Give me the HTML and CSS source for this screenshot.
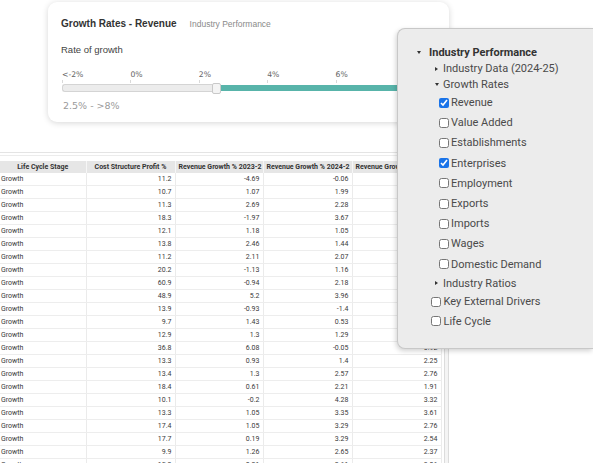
FILE: index.html
```html
<!DOCTYPE html>
<html lang="en">
<head>
    <meta charset="UTF-8">
    <meta name="viewport" content="width=device-width, initial-scale=1.0">
    <title>Growth Rates - Revenue</title>
    <link rel="stylesheet" href="styles.css">
</head>
<body>
    <div class="card">
        <div class="card-head">
            <span class="card-title">Growth Rates - Revenue</span>
            <span class="card-sub">Industry Performance</span>
        </div>
        <div class="rate-label">Rate of growth</div>
        <div class="scale">
            <div class="mark">&lt;-2%</div>
            <div class="mark">0%</div>
            <div class="mark">2%</div>
            <div class="mark">4%</div>
            <div class="mark">6%</div>
            <div class="mark">&gt;8%</div>
        </div>
        <div class="track">
            <div class="track-off"></div>
            <div class="handle"></div>
            <div class="track-on"></div>
        </div>
        <div class="range-text">2.5% - &gt;8%</div>
    </div>

    <div class="grid">
        <div class="grid-inner">
            <table class="data">
                <colgroup>
                    <col style="width:86px"><col style="width:89px"><col style="width:88px"><col style="width:89px"><col style="width:89px">
                </colgroup>
                <thead>
                    <tr>
                        <th>Life Cycle Stage</th>
                        <th>Cost Structure Profit %</th>
                        <th>Revenue Growth % 2023-2</th>
                        <th>Revenue Growth % 2024-2</th>
                        <th>Revenue Growth % 2025-2</th>
                    </tr>
                </thead>
                <tbody>
                    <tr><td>Growth</td><td>11.2</td><td>-4.69</td><td>-0.06</td><td>1.85</td></tr>
                    <tr><td>Growth</td><td>10.7</td><td>1.07</td><td>1.99</td><td>2.12</td></tr>
                    <tr><td>Growth</td><td>11.3</td><td>2.69</td><td>2.28</td><td>2.4</td></tr>
                    <tr><td>Growth</td><td>18.3</td><td>-1.97</td><td>3.67</td><td>3.05</td></tr>
                    <tr><td>Growth</td><td>12.1</td><td>1.18</td><td>1.05</td><td>1.62</td></tr>
                    <tr><td>Growth</td><td>13.8</td><td>2.46</td><td>1.44</td><td>1.97</td></tr>
                    <tr><td>Growth</td><td>11.2</td><td>2.11</td><td>2.07</td><td>2.3</td></tr>
                    <tr><td>Growth</td><td>20.2</td><td>-1.13</td><td>1.16</td><td>1.48</td></tr>
                    <tr><td>Growth</td><td>60.9</td><td>-0.94</td><td>2.18</td><td>2.6</td></tr>
                    <tr><td>Growth</td><td>48.9</td><td>5.2</td><td>3.96</td><td>3.71</td></tr>
                    <tr><td>Growth</td><td>13.9</td><td>-0.93</td><td>-1.4</td><td>0.84</td></tr>
                    <tr><td>Growth</td><td>9.7</td><td>1.43</td><td>0.53</td><td>1.12</td></tr>
                    <tr><td>Growth</td><td>12.9</td><td>1.3</td><td>1.29</td><td>1.66</td></tr>
                    <tr><td>Growth</td><td>36.8</td><td>6.08</td><td>-0.05</td><td>0.92</td></tr>
                    <tr><td>Growth</td><td>13.3</td><td>0.93</td><td>1.4</td><td>2.25</td></tr>
                    <tr><td>Growth</td><td>13.4</td><td>1.3</td><td>2.57</td><td>2.76</td></tr>
                    <tr><td>Growth</td><td>18.4</td><td>0.61</td><td>2.21</td><td>1.91</td></tr>
                    <tr><td>Growth</td><td>10.1</td><td>-0.2</td><td>4.28</td><td>3.32</td></tr>
                    <tr><td>Growth</td><td>13.3</td><td>1.05</td><td>3.35</td><td>3.61</td></tr>
                    <tr><td>Growth</td><td>17.4</td><td>1.05</td><td>3.29</td><td>2.76</td></tr>
                    <tr><td>Growth</td><td>17.7</td><td>0.19</td><td>3.29</td><td>2.54</td></tr>
                    <tr><td>Growth</td><td>9.9</td><td>1.26</td><td>2.65</td><td>2.37</td></tr>
                    <tr><td>Growth</td><td>15.2</td><td>0.21</td><td>2.61</td><td>3.06</td></tr>
                </tbody>
            </table>
            <div class="vscroll"></div>
        </div>
    </div>

    <div class="menu">
        <div class="node lvl0"><i class="caret down"></i>Industry Performance</div>
        <div class="node lvl1"><i class="caret right"></i>Industry Data (2024-25)</div>
        <div class="node lvl1"><i class="caret down"></i>Growth Rates</div>
        <label class="opt lvl2"><input type="checkbox" checked>Revenue</label>
        <label class="opt lvl2"><input type="checkbox">Value Added</label>
        <label class="opt lvl2"><input type="checkbox">Establishments</label>
        <label class="opt lvl2"><input type="checkbox" checked>Enterprises</label>
        <label class="opt lvl2"><input type="checkbox">Employment</label>
        <label class="opt lvl2"><input type="checkbox">Exports</label>
        <label class="opt lvl2"><input type="checkbox">Imports</label>
        <label class="opt lvl2"><input type="checkbox">Wages</label>
        <label class="opt lvl2"><input type="checkbox">Domestic Demand</label>
        <div class="node lvl1 ratios"><i class="caret right"></i>Industry Ratios</div>
        <label class="opt lvl1 drivers"><input type="checkbox">Key External Drivers</label>
        <label class="opt lvl1"><input type="checkbox">Life Cycle</label>
    </div>
</body>
</html>
```

FILE: styles.css
```css
html, body {
    margin: 0;
    padding: 0;
    background: #fff;
    height: 463px;
    overflow: hidden;
}
body {
    font-family: "Liberation Sans", Arial, sans-serif;
    color: #333;
    position: relative;
}
.card {
    box-sizing: border-box;
    width: 401px;
    height: 120px;
    margin: 2px 0 0 48px;
    padding: 15.5px 14px 0 13px;
    background: #fff;
    border-radius: 9px;
    box-shadow: 0 1px 6px rgba(0, 0, 0, 0.16);
}
.card-head {
    display: flex;
    align-items: baseline;
    line-height: 12px;
}
.card-title {
    font-size: 10px;
    font-weight: bold;
    color: #333;
}
.card-sub {
    margin-left: 13px;
    font-size: 8.5px;
    color: #8a8a8a;
}
.rate-label {
    margin-top: 14px;
    font-size: 9.5px;
    line-height: 12px;
    color: #444;
}
.scale {
    display: flex;
    width: 373px;
    margin: 14px 0 0 1px;
    font-family: "DejaVu Sans", Verdana, sans-serif;
    font-size: 7.7px;
    line-height: 10px;
    color: #666;
}
.mark {
    flex: 0 0 68.4px;
}
.mark:last-child {
    flex: 1;
    visibility: hidden;
}
.mark::after {
    content: "";
    display: block;
    width: 0;
    height: 3px;
    border-left: 1px solid #d9d9d9;
}
.track {
    display: flex;
    align-items: center;
    width: 373px;
    height: 11px;
    margin-left: 1px;
}
.track-off {
    box-sizing: border-box;
    width: 150px;
    height: 8px;
    background: #ececec;
    border: 1px solid #d4d4d4;
    border-right: none;
    border-radius: 3px 0 0 3px;
}
.handle {
    box-sizing: border-box;
    width: 9px;
    height: 11px;
    background: #f4f4f4;
    border: 1px solid #c9c9c9;
    border-radius: 2px;
}
.track-on {
    flex: 1;
    height: 6px;
    background: #58b4aa;
}
.range-text {
    margin: 6px 0 0 2px;
    font-family: "DejaVu Sans", Verdana, sans-serif;
    font-size: 9.5px;
    line-height: 12px;
    color: #9a9a9a;
}

/* table */
.grid {
    width: 449px;
    margin-top: 30px;
    border-top: 1px solid #e4e4e4;
    padding-top: 2px;
}
.grid-inner {
    display: flex;
    border-top: 1px solid #ececec;
    padding-top: 5px;
}
.data {
    border-collapse: collapse;
    table-layout: fixed;
    width: 441px;
    font-family: Roboto, "Liberation Sans", sans-serif;
    font-size: 7px;
    color: #3a3a3a;
}
.data th {
    height: 12px;
    padding: 0 3px;
    background: #e6e6e6;
    border-right: 1px solid #f6f6f6;
    font-weight: bold;
    text-align: center;
    white-space: nowrap;
    overflow: hidden;
    line-height: 12px;
    color: #333;
}
.data td {
    height: 12px;
    padding: 0 3px;
    line-height: 12px;
    text-align: right;
    border-right: 1px solid #ebebeb;
    border-bottom: 1px solid #ededed;
    white-space: nowrap;
    overflow: hidden;
}
.data td:first-child {
    text-align: left;
    padding-left: 1px;
}
.vscroll {
    box-sizing: border-box;
    width: 6px;
    margin-left: 2px;
    background: #f4f4f4;
    border-left: 1px solid #dcdcdc;
    border-right: 1px solid #dcdcdc;
}

/* tree menu */
.menu {
    position: absolute;
    left: 397px;
    top: 28px;
    box-sizing: border-box;
    width: 196px;
    height: 321px;
    padding-top: 15.5px;
    background: #ececec;
    border: 1px solid #c8c8c8;
    border-right: none;
    border-radius: 8px 0 0 8px;
    box-shadow: -1px 2px 5px rgba(0, 0, 0, 0.18);
    font-family: Roboto, "Liberation Sans", sans-serif;
    font-size: 11px;
    color: #4a4a4a;
}
.node, .opt {
    display: flex;
    align-items: center;
    white-space: nowrap;
}
.node {
    height: 16px;
}
.node.lvl0 {
    padding-left: 18.5px;
    font-weight: bold;
    color: #333;
}
.node.lvl0 .caret {
    margin-right: 7.5px;
}
.node.lvl1 {
    padding-left: 36px;
}
.node.ratios {
    height: 18px;
}
.caret {
    display: flex;
    justify-content: center;
    width: 5px;
    margin-right: 4px;
}
.caret::before {
    content: "";
    width: 0;
    height: 0;
}
.caret.down::before {
    border-left: 2px solid transparent;
    border-right: 2px solid transparent;
    border-top: 3px solid #333;
}
.caret.right::before {
    border-top: 2px solid transparent;
    border-bottom: 2px solid transparent;
    border-left: 3px solid #333;
}
.opt {
    height: 20.2px;
}
.opt.lvl2 {
    padding-left: 40.5px;
}
.opt.lvl1 {
    padding-left: 33px;
    height: 20px;
}
.opt.drivers {
    height: 19px;
}
.opt input {
    width: 10px;
    height: 10px;
    margin: 0 2.5px 0 0;
    accent-color: #1a73e8;
}
```
